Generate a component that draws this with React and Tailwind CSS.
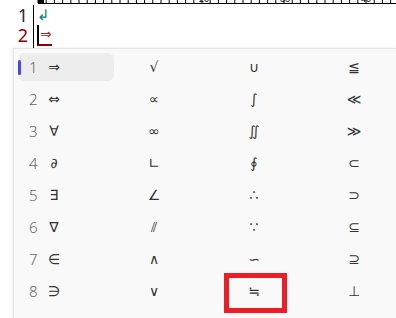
import React from 'react';

const rows = [
  ['⇒', '√', '∪', '≦'],
  ['⇔', '∝', '∫', '≪'],
  ['∀', '∞', '∬', '≫'],
  ['∂', '∟', '∮', '⊂'],
  ['∃', '∠', '∴', '⊃'],
  ['∇', '⫽', '∵', '⊆'],
  ['∈', '∧', '∽', '⊇'],
  ['∋', '∨', '≒', '⊥'],
];

// ruler across the top edge, mostly clipped
const Ruler = () => {
  const ticks = [];
  for (let i = 0; i < 45; i++) {
    const x = 38 + i * 8.2;
    ticks.push(<line key={i} x1={x} y1="0" x2={x} y2="3" stroke="#000" strokeWidth="1" />);
  }
  return (
    <svg width="396" height="5" className="block">
      <rect x="38" y="0" width="6" height="3" fill="#000" />
      {ticks}
      <line x1="38" y1="3.5" x2="396" y2="3.5" stroke="#000" strokeWidth="1" />
      {[20, 30, 40].map((n, i) => (
        <text key={n} x={199 + i * 81} y="1.5" fontSize="9" fontFamily="Liberation Sans, sans-serif" fill="#000">{n}</text>
      ))}
    </svg>
  );
};

const Cell = ({ num, sym, active, showNum }) => (
  <div className={`relative h-[28px] flex items-center pl-[11px] rounded-md ${active ? 'bg-[#ededed]' : ''}`}>
    {active && <span className="absolute left-0 top-[7px] w-[3px] h-[15px] rounded-full bg-[#4646f5]" />}
    <span className={`w-[16px] text-[15px] font-light text-[#666] ${showNum ? '' : 'invisible'}`}
      style={{ fontFamily: '"Noto Sans", sans-serif' }}>{num}</span>
    <span className="w-[18px] text-center text-[14px] text-[#333]"
      style={{ fontFamily: '"DejaVu Sans", sans-serif' }}>{sym}</span>
  </div>
);

export default function App() {
  return (
    <div className="relative w-[396px] h-[318px] overflow-hidden bg-white">
      <Ruler />
      {/* editor lines */}
      <div className="flex h-[43px]">
        <div className="w-[33px] flex flex-col items-end pr-[5px] text-[18px] leading-[20px]"
          style={{ fontFamily: '"Noto Sans", sans-serif' }}>
          <span className="text-[#2a2a3a]">1</span>
          <span className="text-[#8b0000]">2</span>
        </div>
        <div className="w-px bg-black" />
        <div className="flex flex-col pl-[3px]">
          <span className="h-[20px] text-[15px] leading-[20px] text-[#008080]"
            style={{ fontFamily: '"DejaVu Sans", sans-serif' }}>↲</span>
          <div className="flex items-center h-[21px] border-b-2 border-[#8b0000] w-[15px]">
            <span className="w-[2px] h-[20px] bg-black" />
            <span className="text-[14px] text-[#9b2a2a] ml-[1px]"
              style={{ fontFamily: '"DejaVu Sans", sans-serif' }}>⇒</span>
          </div>
        </div>
      </div>
      {/* suggestion popup */}
      <div className="ml-[13px] h-[280px] bg-[#f9f9f9] border-t border-l border-[#e6e6e6] shadow-[-1px_0_3px_rgba(0,0,0,0.08)] pl-[4px] pt-[4px]">
        <div className="grid grid-cols-[96px_96px_96px_96px] gap-x-[4px] gap-y-[4px]">
          {rows.map((r, i) =>
            r.map((s, j) => (
              <Cell key={`${i}-${j}`} num={i + 1} sym={s} active={i === 0 && j === 0} showNum={j === 0} />
            ))
          )}
        </div>
      </div>
      {/* highlight box */}
      <div className="absolute left-[224px] top-[273px] w-[63px] h-[40px] border-[5px] border-[#ee1c25]" />
    </div>
  );
}
